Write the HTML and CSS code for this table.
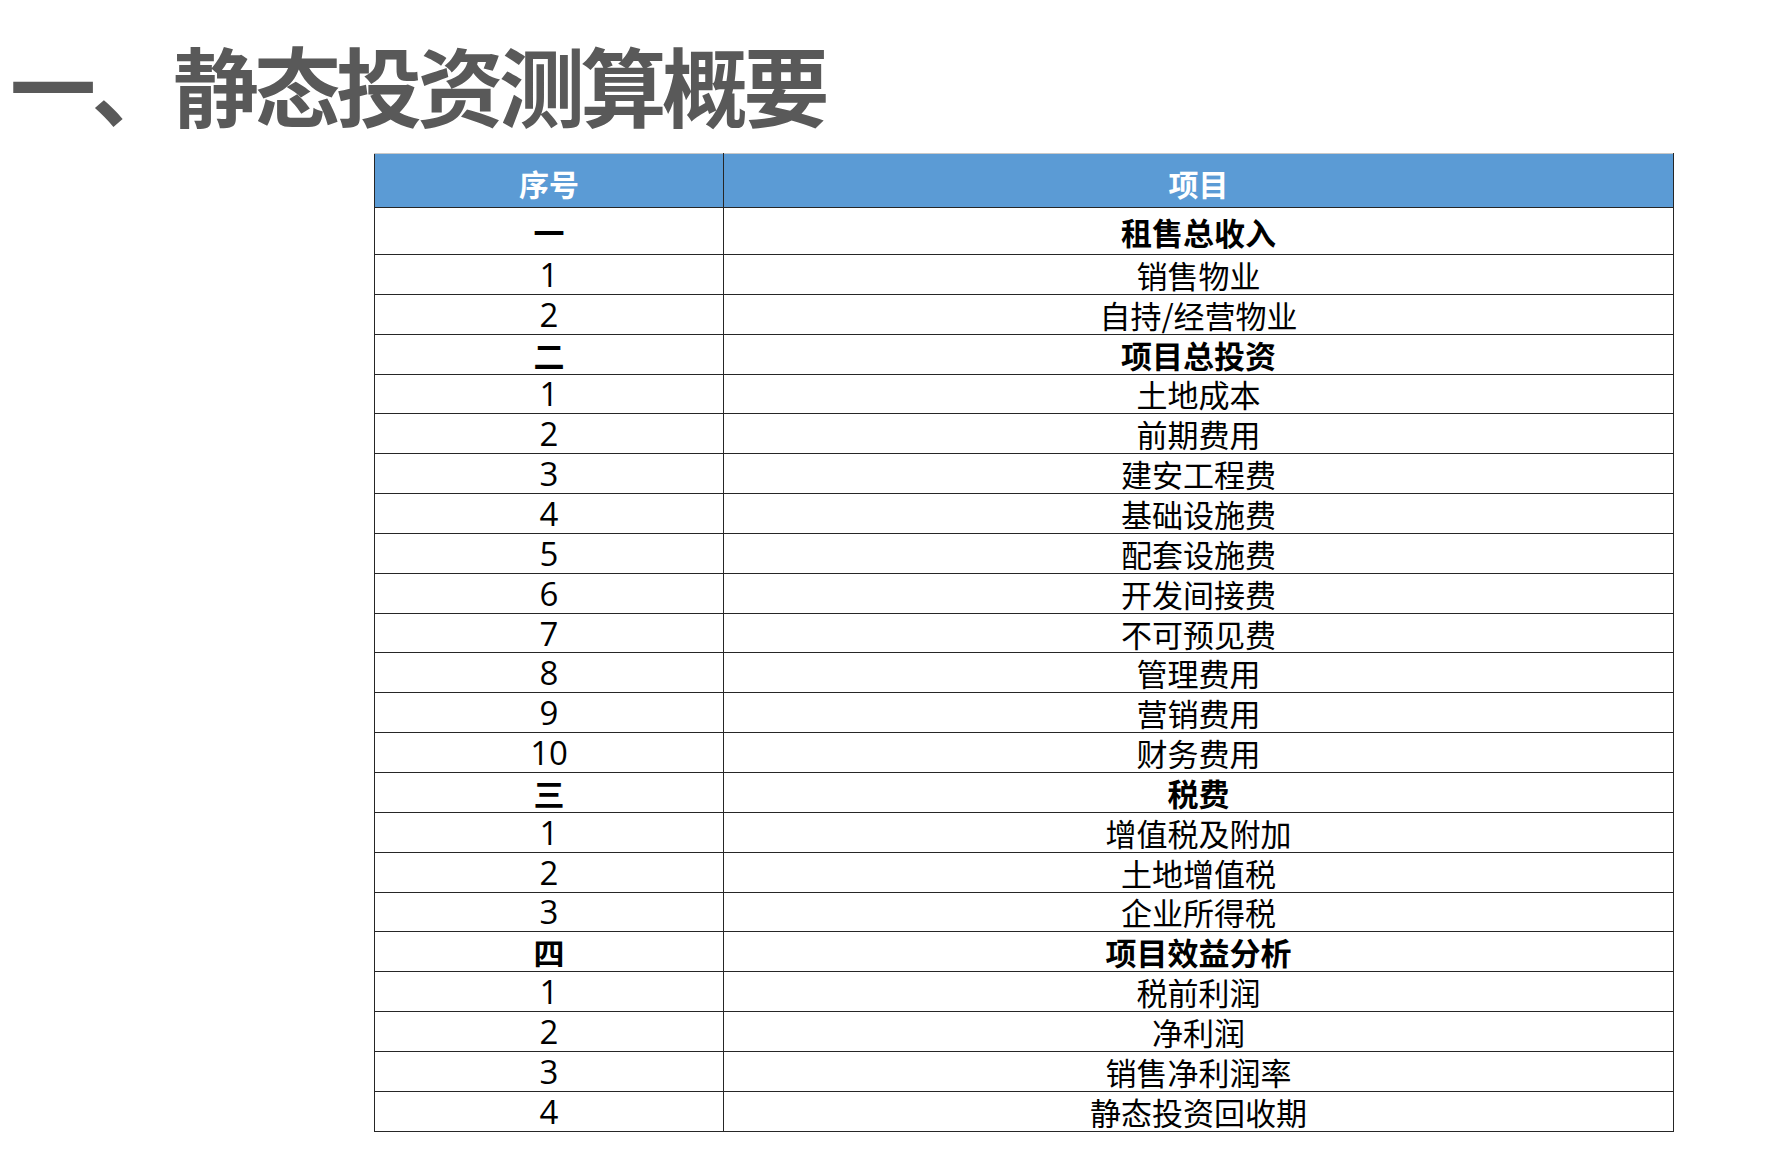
FILE: index.html
```html
<!DOCTYPE html>
<html lang="zh-CN">
<head>
<meta charset="utf-8">
<title>静态投资测算概要</title>
<link rel="stylesheet" href="styles.css">
</head>
<body>
<div class="page">
  <h1 class="title">一、静态投资测算概要</h1>
  <table class="summary">
    <thead>
      <tr><th class="col-no">序号</th><th class="col-item">项目</th></tr>
    </thead>
    <tbody>
      <tr class="section first"><td class="no">一</td><td>租售总收入</td></tr>
      <tr><td class="no">1</td><td>销售物业</td></tr>
      <tr><td class="no">2</td><td>自持/经营物业</td></tr>
      <tr class="section"><td class="no">二</td><td>项目总投资</td></tr>
      <tr><td class="no">1</td><td>土地成本</td></tr>
      <tr><td class="no">2</td><td>前期费用</td></tr>
      <tr><td class="no">3</td><td>建安工程费</td></tr>
      <tr><td class="no">4</td><td>基础设施费</td></tr>
      <tr><td class="no">5</td><td>配套设施费</td></tr>
      <tr><td class="no">6</td><td>开发间接费</td></tr>
      <tr><td class="no">7</td><td>不可预见费</td></tr>
      <tr><td class="no">8</td><td>管理费用</td></tr>
      <tr><td class="no">9</td><td>营销费用</td></tr>
      <tr><td class="no">10</td><td>财务费用</td></tr>
      <tr class="section"><td class="no">三</td><td>税费</td></tr>
      <tr><td class="no">1</td><td>增值税及附加</td></tr>
      <tr><td class="no">2</td><td>土地增值税</td></tr>
      <tr><td class="no">3</td><td>企业所得税</td></tr>
      <tr class="section"><td class="no">四</td><td>项目效益分析</td></tr>
      <tr><td class="no">1</td><td>税前利润</td></tr>
      <tr><td class="no">2</td><td>净利润</td></tr>
      <tr><td class="no">3</td><td>销售净利润率</td></tr>
      <tr><td class="no">4</td><td>静态投资回收期</td></tr>
    </tbody>
  </table>
</div>
</body>
</html>
```
FILE: styles.css
```css
html, body {
  margin: 0;
  padding: 0;
  background: #ffffff;
}

.page {
  width: 1774px;
  height: 1150px;
  overflow: hidden;
  padding-top: 41px;
  box-sizing: border-box;
  font-family: "Noto Sans CJK SC", "Noto Sans", sans-serif;
}

.title {
  margin: 0 0 26px 0;
  padding-left: 10px;
  font-size: 86px;
  line-height: 86px;
  height: 86px;
  font-weight: 700;
  color: #595959;
  letter-spacing: -4.5px;
  white-space: nowrap;
}

.summary {
  margin-left: 374px;
  width: 1297px;
  border-collapse: collapse;
  table-layout: fixed;
}

.summary th,
.summary td {
  border: 1px solid #262626;
  padding: 0;
  text-align: center;
  vertical-align: middle;
  color: #000000;
  font-size: 31px;
  font-weight: 400;
  line-height: 1;
  height: 38.85px;
  white-space: nowrap;
}

.summary thead th {
  background: #5b9bd5;
  color: #ffffff;
  font-weight: 700;
  font-size: 30px;
  height: 48px;
  padding-top: 5px;
  border-top-color: #c8c8c8;
}

.col-no {
  width: 348px;
}

.col-item {
  width: 949px;
}

.summary td.no {
  font-family: "Open Sans", "Noto Sans CJK SC", sans-serif;
  font-size: 33px;
}

.summary tr.section td {
  font-weight: 700;
}

.summary tr.section td.no {
  font-family: "Noto Sans CJK SC", sans-serif;
  font-size: 31px;
}

.summary tr.first td {
  height: 46px;
}
```
